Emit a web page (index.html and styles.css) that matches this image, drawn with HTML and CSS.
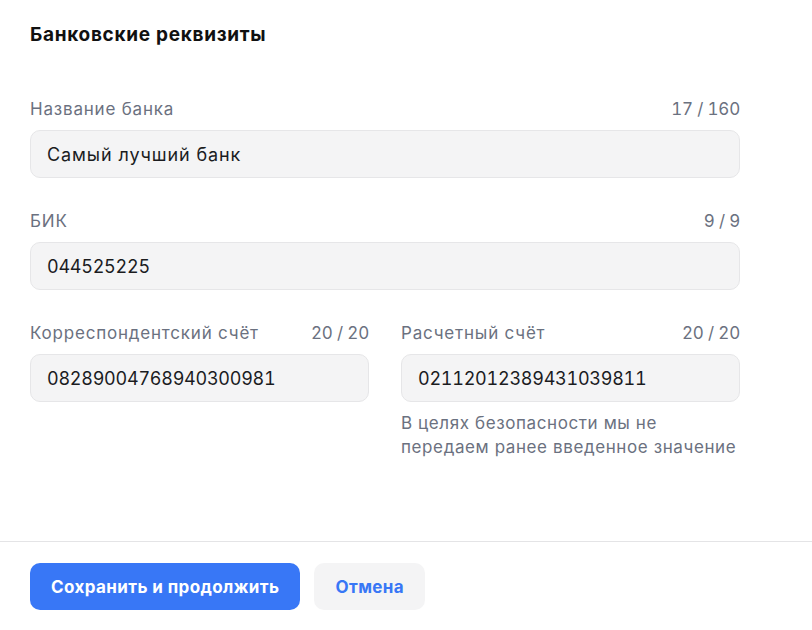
FILE: index.html
```html
<!DOCTYPE html>
<html lang="ru">
<head>
  <meta charset="UTF-8">
  <meta name="viewport" content="width=device-width, initial-scale=1.0">
  <title>Банковские реквизиты</title>
  <link rel="stylesheet" href="styles.css">
</head>
<body>
  <section class="bank-form">
    <div class="content">
      <h1>Банковские реквизиты</h1>
      <div class="field">
        <div class="field-head">
          <label for="bank_name">Название банка</label>
          <span class="counter">17 / 160</span>
        </div>
        <input type="text" id="bank_name" value="Самый лучший банк">
      </div>
      <div class="field">
        <div class="field-head">
          <label for="bik">БИК</label>
          <span class="counter">9 / 9</span>
        </div>
        <input type="text" class="numeric" id="bik" value="044525225">
      </div>
      <div class="row">
        <div class="field">
          <div class="field-head">
            <label for="corr_account">Корреспондентский счёт</label>
            <span class="counter">20 / 20</span>
          </div>
          <input type="text" class="numeric" id="corr_account" value="08289004768940300981">
        </div>
        <div class="field">
          <div class="field-head">
            <label for="account">Расчетный счёт</label>
            <span class="counter">20 / 20</span>
          </div>
          <input type="text" class="numeric" id="account" value="02112012389431039811">
          <p class="hint">В целях безопасности мы не передаем ранее введенное значение</p>
        </div>
      </div>
    </div>
    <footer class="actions">
      <button type="submit" class="btn btn-primary">Сохранить и продолжить</button>
      <button type="button" class="btn btn-secondary">Отмена</button>
    </footer>
  </section>
</body>
</html>
```

FILE: styles.css
```css
body {
  margin: 0;
  background: #fff;
  font-family: Inter, Roboto, "Noto Sans", sans-serif;
  color: #1b1c1f;
}
.bank-form {
  display: flex;
  flex-direction: column;
  height: 100vh;
}
.content {
  flex: 1;
  width: 710px;
  padding: 23px 0 0 30px;
}
h1 {
  margin: 0 0 50px;
  font-size: 19px;
  line-height: 24px;
  font-weight: 700;
  letter-spacing: 0.7px;
  color: #111;
}
.field {
  margin-bottom: 31px;
}
.field-head {
  display: flex;
  justify-content: space-between;
  margin-bottom: 9px;
  font-size: 17px;
  line-height: 24px;
  letter-spacing: 0.8px;
  color: #6b7180;
}
.counter {
  font-variant-numeric: tabular-nums;
  letter-spacing: -0.2px;
}
.field input {
  display: block;
  width: 100%;
  box-sizing: border-box;
  height: 48px;
  padding: 0 16px;
  border: 1px solid #e6e6e8;
  border-radius: 10px;
  background: #f4f4f5;
  font-family: inherit;
  font-size: 18px;
  letter-spacing: 0.9px;
  color: #1b1c1f;
  outline: none;
}
.field input.numeric {
  font-variant-numeric: tabular-nums;
  letter-spacing: -0.25px;
}
.row {
  display: grid;
  grid-template-columns: 1fr 1fr;
  gap: 32px;
}
.hint {
  margin: 9px 0 0;
  font-size: 17px;
  line-height: 24px;
  letter-spacing: 0.6px;
  color: #6b7180;
}
.actions {
  display: flex;
  gap: 14px;
  padding: 21px 30px 20px;
  border-top: 1px solid #e4e4e6;
}
.btn {
  height: 47px;
  padding: 0 21px;
  border: 0;
  border-radius: 10px;
  font-family: inherit;
  font-size: 17px;
  font-weight: 700;
  letter-spacing: 0.4px;
  cursor: pointer;
}
.btn-primary {
  background: #3877f6;
  color: #fff;
}
.btn-secondary {
  background: #f4f4f5;
  color: #3877f6;
}
```
